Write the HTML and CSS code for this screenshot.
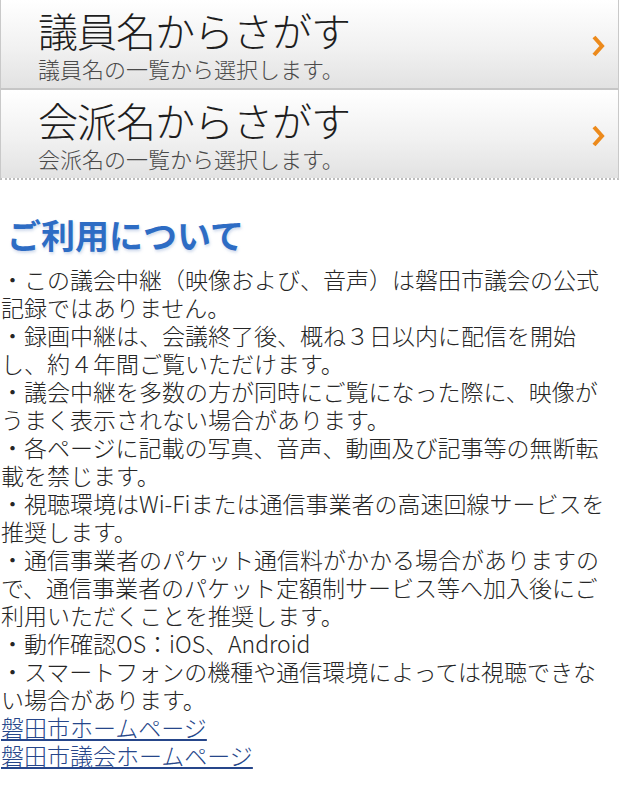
FILE: index.html
```html
<!DOCTYPE html>
<html lang="ja">
  <head>
    <meta charset="UTF-8" />
    <meta name="viewport" content="width=device-width, initial-scale=1.0" />
    <title>磐田市議会 中継</title>
    <link rel="stylesheet" href="styles.css">
  </head>
  <body>
    <nav class="menu">
      <a class="menu-item" href="#">
        <span class="menu-text">
          <span class="menu-title">議員名からさがす</span>
          <span class="menu-sub">議員名の一覧から選択します。</span>
        </span>
        <svg class="menu-arrow" width="14" height="24" viewBox="0 0 14 24">
          <path d="M3 3 L11 12 L3 21" fill="none" stroke="#ec8a1c" stroke-width="4" />
        </svg>
      </a>
      <a class="menu-item menu-item-last" href="#">
        <span class="menu-text">
          <span class="menu-title">会派名からさがす</span>
          <span class="menu-sub">会派名の一覧から選択します。</span>
        </span>
        <svg class="menu-arrow" width="14" height="24" viewBox="0 0 14 24">
          <path d="M3 3 L11 12 L3 21" fill="none" stroke="#ec8a1c" stroke-width="4" />
        </svg>
      </a>
    </nav>

    <section class="about">
      <h2 class="about-title">ご利用について</h2>
      <div class="about-body">
        <p>・この議会中継（映像および、音声）は磐田市議会の公式<br>記録ではありません。</p>
        <p>・録画中継は、会議終了後、概ね３日以内に配信を開始<br>し、約４年間ご覧いただけます。</p>
        <p>・議会中継を多数の方が同時にご覧になった際に、映像が<br>うまく表示されない場合があります。</p>
        <p>・各ページに記載の写真、音声、動画及び記事等の無断転<br>載を禁じます。</p>
        <p>・視聴環境はWi-Fiまたは通信事業者の高速回線サービスを<br>推奨します。</p>
        <p>・通信事業者のパケット通信料がかかる場合がありますの<br>で、通信事業者のパケット定額制サービス等へ加入後にご<br>利用いただくことを推奨します。</p>
        <p>・動作確認OS：iOS、Android</p>
        <p>・スマートフォンの機種や通信環境によっては視聴できな<br>い場合があります。</p>
        <p><a href="#">磐田市ホームページ</a></p>
        <p><a href="#">磐田市議会ホームページ</a></p>
      </div>
    </section>
  </body>
</html>
```

FILE: styles.css
```css
* {
  margin: 0;
  padding: 0;
  box-sizing: border-box;
}

body {
  font-family: 'Noto Sans CJK JP', 'Noto Sans', sans-serif;
  font-weight: 300;
  background: #fff;
  color: #262626;
}

.menu {
  display: flex;
  flex-direction: column;
}

.menu-item {
  display: flex;
  align-items: center;
  justify-content: space-between;
  height: 90px;
  padding: 0 13px 0 37px;
  background: linear-gradient(to bottom, #ffffff 0%, #f1f1f1 55%, #e2e2e2 100%);
  border-left: 1px solid #c9c9c9;
  border-right: 1px solid #c9c9c9;
  border-bottom: 2px solid #c6c6c6;
  text-decoration: none;
  color: #222;
}

.menu-item-last {
  border-bottom: 2px dotted #bdbdbd;
}

.menu-text {
  display: flex;
  flex-direction: column;
  align-self: flex-start;
  padding-top: 8px;
}

.menu-title {
  font-size: 40px;
  line-height: 44px;
  color: #1e1e1e;
  letter-spacing: -1px;
}

.menu-sub {
  font-size: 22px;
  line-height: 32px;
  color: #4a4a4a;
}

.menu-arrow {
  flex-shrink: 0;
  margin-top: 3px;
}

.about {
  padding-top: 35px;
}

.about-title {
  font-size: 34px;
  line-height: 40px;
  font-weight: 700;
  color: #2d6cc4;
  padding-left: 7px;
  text-shadow: 1px 2px 3px rgba(120, 150, 200, 0.35);
  margin-bottom: 10px;
}

.about-body {
  font-size: 23px;
  line-height: 28px;
  white-space: nowrap;
  padding-left: 1px;
}

.about-body a {
  color: #26468a;
  text-decoration: underline;
}
```
